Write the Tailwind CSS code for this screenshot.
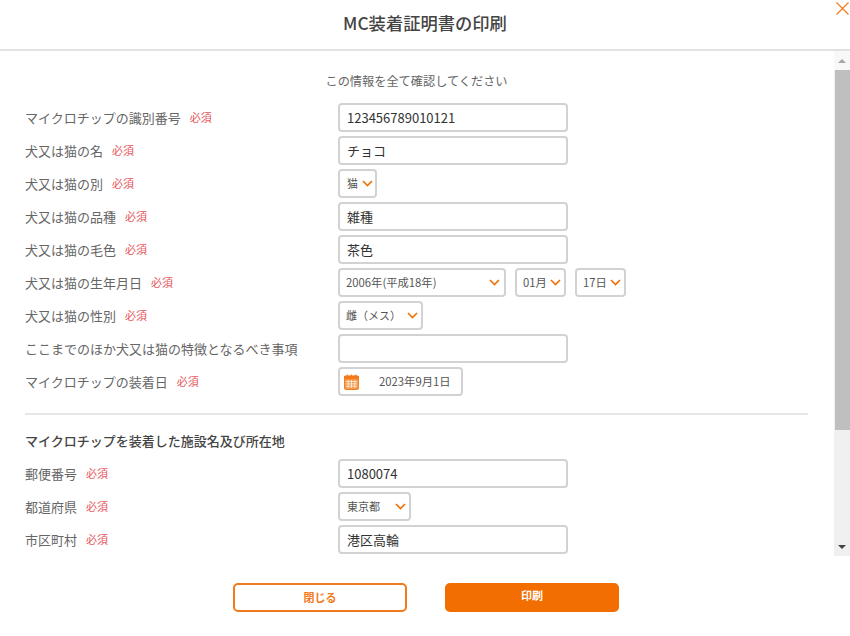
<!DOCTYPE html>
<html lang="ja">
<head>
    <meta charset="UTF-8">
    <meta name="viewport" content="width=device-width, initial-scale=1.0">
    <title>MC装着証明書の印刷</title>
    <script src="https://cdn.jsdelivr.net/npm/@tailwindcss/browser@4"></script>
</head>
<body class="bg-white overflow-hidden font-['Noto_Sans_CJK_JP','Noto_Sans',sans-serif]">
    <div class="relative w-[850px] h-[636px] flex flex-col">
        <!-- Header -->
        <div class="h-[51px] flex items-center justify-center border-b-2 border-[#e2e2e2] pb-[3px] shrink-0">
            <h1 class="text-[17.3px] font-medium text-[#444]">MC装着証明書の印刷</h1>
        </div>
        <svg class="absolute top-[2px] left-[836px] w-[13px] h-[13px]" viewBox="0 0 13 13" fill="none" stroke="#f27a1a" stroke-width="1.2">
            <path d="M0.5 0.5L12.5 12.5M12.5 0.5L0.5 12.5"/>
        </svg>

        <!-- Body -->
        <div class="h-[505px] flex shrink-0 overflow-hidden">
            <div class="w-[834px] pt-[20px] pl-[25px] pr-[26px]">
                <p class="h-[20px] leading-[20px] mb-[12px] text-center text-[12.2px] text-[#666]">この情報を全て確認してください</p>

                <div class="flex flex-col gap-[4px]">
                    <div class="flex h-[29px] items-center">
                        <div class="w-[313px] flex items-center text-[13px] text-[#666]">マイクロチップの識別番号<span class="ml-[9px] text-[11px] text-[#e4575c]">必須</span></div>
                        <div class="w-[230px] h-[29px] flex items-center px-[7px] border-2 border-[#d2d2d2] rounded-[4px] text-[13px] text-[#333]">123456789010121</div>
                    </div>
                    <div class="flex h-[29px] items-center">
                        <div class="w-[313px] flex items-center text-[13px] text-[#666]">犬又は猫の名<span class="ml-[9px] text-[11px] text-[#e4575c]">必須</span></div>
                        <div class="w-[230px] h-[29px] flex items-center px-[7px] border-2 border-[#d2d2d2] rounded-[4px] text-[13px] text-[#333]">チョコ</div>
                    </div>
                    <div class="flex h-[29px] items-center">
                        <div class="w-[313px] flex items-center text-[13px] text-[#666]">犬又は猫の別<span class="ml-[9px] text-[11px] text-[#e4575c]">必須</span></div>
                        <div class="w-[39px] h-[29px] flex items-center justify-between pl-[7px] pr-[2px] border-2 border-[#d2d2d2] rounded-[4px] text-[11px] text-[#555]">猫
                            <svg class="w-[11px] h-[7px]" viewBox="0 0 11 7" fill="none" stroke="#f26e00" stroke-width="1.6"><path d="M1 1L5.5 5.5L10 1"/></svg>
                        </div>
                    </div>
                    <div class="flex h-[29px] items-center">
                        <div class="w-[313px] flex items-center text-[13px] text-[#666]">犬又は猫の品種<span class="ml-[9px] text-[11px] text-[#e4575c]">必須</span></div>
                        <div class="w-[230px] h-[29px] flex items-center px-[7px] border-2 border-[#d2d2d2] rounded-[4px] text-[13px] text-[#333]">雑種</div>
                    </div>
                    <div class="flex h-[29px] items-center">
                        <div class="w-[313px] flex items-center text-[13px] text-[#666]">犬又は猫の毛色<span class="ml-[9px] text-[11px] text-[#e4575c]">必須</span></div>
                        <div class="w-[230px] h-[29px] flex items-center px-[7px] border-2 border-[#d2d2d2] rounded-[4px] text-[13px] text-[#333]">茶色</div>
                    </div>
                    <div class="flex h-[29px] items-center">
                        <div class="w-[313px] flex items-center text-[13px] text-[#666]">犬又は猫の生年月日<span class="ml-[9px] text-[11px] text-[#e4575c]">必須</span></div>
                        <div class="flex gap-[9px]">
                            <div class="w-[168px] h-[29px] flex items-center justify-between pl-[6px] pr-[4px] border-2 border-[#d2d2d2] rounded-[4px] text-[11.3px] text-[#555]">2006年(平成18年)
                                <svg class="w-[11px] h-[7px]" viewBox="0 0 11 7" fill="none" stroke="#f26e00" stroke-width="1.6"><path d="M1 1L5.5 5.5L10 1"/></svg>
                            </div>
                            <div class="w-[51px] h-[29px] flex items-center justify-between pl-[6px] pr-[3px] border-2 border-[#d2d2d2] rounded-[4px] text-[11.3px] text-[#555]">01月
                                <svg class="w-[11px] h-[7px]" viewBox="0 0 11 7" fill="none" stroke="#f26e00" stroke-width="1.6"><path d="M1 1L5.5 5.5L10 1"/></svg>
                            </div>
                            <div class="w-[51px] h-[29px] flex items-center justify-between pl-[6px] pr-[3px] border-2 border-[#d2d2d2] rounded-[4px] text-[11.3px] text-[#555]">17日
                                <svg class="w-[11px] h-[7px]" viewBox="0 0 11 7" fill="none" stroke="#f26e00" stroke-width="1.6"><path d="M1 1L5.5 5.5L10 1"/></svg>
                            </div>
                        </div>
                    </div>
                    <div class="flex h-[29px] items-center">
                        <div class="w-[313px] flex items-center text-[13px] text-[#666]">犬又は猫の性別<span class="ml-[9px] text-[11px] text-[#e4575c]">必須</span></div>
                        <div class="w-[85px] h-[29px] flex items-center justify-between pl-[6px] pr-[3px] border-2 border-[#d2d2d2] rounded-[4px] text-[11px] text-[#555]">雌（メス）
                            <svg class="w-[11px] h-[7px]" viewBox="0 0 11 7" fill="none" stroke="#f26e00" stroke-width="1.6"><path d="M1 1L5.5 5.5L10 1"/></svg>
                        </div>
                    </div>
                    <div class="flex h-[29px] items-center">
                        <div class="w-[313px] text-[13px] text-[#666]">ここまでのほか犬又は猫の特徴となるべき事項</div>
                        <div class="w-[230px] h-[29px] border-2 border-[#d2d2d2] rounded-[4px]"></div>
                    </div>
                    <div class="flex h-[29px] items-center">
                        <div class="w-[313px] flex items-center text-[13px] text-[#666]">マイクロチップの装着日<span class="ml-[9px] text-[11px] text-[#e4575c]">必須</span></div>
                        <div class="w-[125px] h-[29px] flex items-center pl-[4px] border-2 border-[#d2d2d2] rounded-[4px] text-[11.3px] text-[#555]">
                            <svg class="w-[15px] h-[16px] shrink-0" viewBox="0 0 16 17" fill="none">
                                <rect x="0.5" y="2" width="15" height="14.5" rx="1.5" fill="#f59a4c" stroke="#f27a1a"/>
                                <rect x="0" y="2" width="16" height="3.5" fill="#f27a1a"/>
                                <path d="M3.5 0.5V3M8 0.5V3M12.5 0.5V3" stroke="#f27a1a" stroke-width="1.2"/>
                                <path d="M2 8H14M2 10.5H14M2 13H14M4.5 6.5V15M8 6.5V15M11.5 6.5V15" stroke="#fff" stroke-width="0.7"/>
                            </svg>
                            <span class="ml-[20px]">2023年9月1日</span>
                        </div>
                    </div>
                </div>

                <hr class="mt-[17px] border-t-2 border-[#e6e6e6]">
                <h2 class="mt-[16px] mb-[9px] h-[19px] leading-[19px] text-[13px] font-medium text-[#444]">マイクロチップを装着した施設名及び所在地</h2>

                <div class="flex flex-col gap-[4px]">
                    <div class="flex h-[29px] items-center">
                        <div class="w-[313px] flex items-center text-[13px] text-[#666]">郵便番号<span class="ml-[9px] text-[11px] text-[#e4575c]">必須</span></div>
                        <div class="w-[230px] h-[29px] flex items-center px-[7px] border-2 border-[#d2d2d2] rounded-[4px] text-[13px] text-[#333]">1080074</div>
                    </div>
                    <div class="flex h-[29px] items-center">
                        <div class="w-[313px] flex items-center text-[13px] text-[#666]">都道府県<span class="ml-[9px] text-[11px] text-[#e4575c]">必須</span></div>
                        <div class="w-[73px] h-[29px] flex items-center justify-between pl-[7px] pr-[3px] border-2 border-[#d2d2d2] rounded-[4px] text-[11px] text-[#555]">東京都
                            <svg class="w-[11px] h-[7px]" viewBox="0 0 11 7" fill="none" stroke="#f26e00" stroke-width="1.6"><path d="M1 1L5.5 5.5L10 1"/></svg>
                        </div>
                    </div>
                    <div class="flex h-[29px] items-center">
                        <div class="w-[313px] flex items-center text-[13px] text-[#666]">市区町村<span class="ml-[9px] text-[11px] text-[#e4575c]">必須</span></div>
                        <div class="w-[230px] h-[29px] flex items-center px-[7px] border-2 border-[#d2d2d2] rounded-[4px] text-[13px] text-[#333]">港区高輪</div>
                    </div>
                </div>
            </div>

            <!-- Scrollbar -->
            <div class="w-[16px] flex flex-col bg-[#f0f0f0]">
                <div class="h-[19px] bg-[#f8f8f8] flex items-center justify-center">
                    <div class="w-0 h-0 border-x-[4px] border-x-transparent border-b-[4px] border-b-[#a6a6a6]"></div>
                </div>
                <div class="h-[360px] ml-[1px] bg-[#bfbfbf]"></div>
                <div class="flex-1 flex items-end justify-center pb-[7px]">
                    <div class="w-0 h-0 border-x-[4px] border-x-transparent border-t-[4px] border-t-[#444]"></div>
                </div>
            </div>
        </div>

        <!-- Footer -->
        <div class="flex justify-center gap-[38px] pt-[27px] pl-[2px]">
            <button class="w-[174px] h-[29px] flex items-center justify-center border-2 border-[#f27a1a] rounded-[5px] bg-white text-[11px] font-bold text-[#f27a1a]">閉じる</button>
            <button class="w-[174px] h-[29px] flex items-center justify-center pb-[5px] rounded-[5px] bg-[#f26e00] text-[11px] font-bold text-white">印刷</button>
        </div>
    </div>
</body>
</html>
